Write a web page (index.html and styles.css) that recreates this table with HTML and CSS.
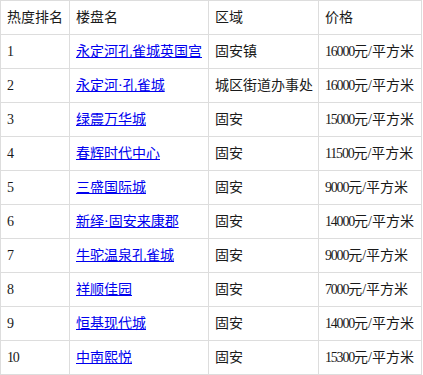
FILE: index.html
```html
<!DOCTYPE html>
<html lang="zh">
<head>
<meta charset="utf-8">
<title>热度排名</title>
<link rel="stylesheet" href="styles.css">
</head>
<body>
<table class="rank">
  <colgroup>
    <col class="c-rank">
    <col class="c-name">
    <col class="c-area">
    <col class="c-price">
  </colgroup>
  <thead>
    <tr><th>热度排名</th><th>楼盘名</th><th>区域</th><th>价格</th></tr>
  </thead>
  <tbody>
    <tr><td><span class="num">1</span></td><td><a href="#">永定河孔雀城英国宫</a></td><td>固安镇</td><td><span class="num">16000</span>元/平方米</td></tr>
    <tr><td><span class="num">2</span></td><td><a href="#">永定河·孔雀城</a></td><td>城区街道办事处</td><td><span class="num">16000</span>元/平方米</td></tr>
    <tr><td><span class="num">3</span></td><td><a href="#">绿震万华城</a></td><td>固安</td><td><span class="num">15000</span>元/平方米</td></tr>
    <tr><td><span class="num">4</span></td><td><a href="#">春辉时代中心</a></td><td>固安</td><td><span class="num">11500</span>元/平方米</td></tr>
    <tr><td><span class="num">5</span></td><td><a href="#">三盛国际城</a></td><td>固安</td><td><span class="num">9000</span>元/平方米</td></tr>
    <tr><td><span class="num">6</span></td><td><a href="#">新绎·固安来康郡</a></td><td>固安</td><td><span class="num">14000</span>元/平方米</td></tr>
    <tr><td><span class="num">7</span></td><td><a href="#">牛驼温泉孔雀城</a></td><td>固安</td><td><span class="num">9000</span>元/平方米</td></tr>
    <tr><td><span class="num">8</span></td><td><a href="#">祥顺佳园</a></td><td>固安</td><td><span class="num">7000</span>元/平方米</td></tr>
    <tr><td><span class="num">9</span></td><td><a href="#">恒基现代城</a></td><td>固安</td><td><span class="num">14000</span>元/平方米</td></tr>
    <tr><td><span class="num">10</span></td><td><a href="#">中南熙悦</a></td><td>固安</td><td><span class="num">15300</span>元/平方米</td></tr>
  </tbody>
</table>
</body>
</html>
```

FILE: styles.css
```css
html, body {
  margin: 0;
  padding: 0;
  background: #fff;
}

.rank {
  border-collapse: collapse;
  table-layout: fixed;
  width: 422px;
  font-family: "Liberation Serif", "Noto Sans CJK SC", serif;
  font-size: 14px;
  line-height: 21px;
  color: #1a1a1a;
}

.c-rank { width: 69px; }
.c-name { width: 139px; }
.c-area { width: 110px; }
.c-price { width: 103px; }

.rank th,
.rank td {
  border: 1px solid #ddd;
  padding: 6px 6px;
  text-align: left;
  font-weight: normal;
  white-space: nowrap;
  overflow: hidden;
}

.rank a {
  color: #00e;
  text-decoration: underline;
}

.num {
  letter-spacing: -1.2px;
}
```
